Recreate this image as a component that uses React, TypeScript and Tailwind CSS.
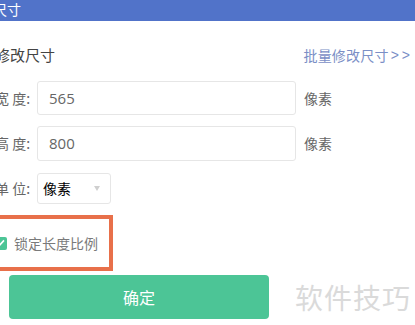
export default function App() {
  return (
    <div className="w-[415px] h-[325px] overflow-hidden bg-white font-['Noto_Sans_CJK_SC',sans-serif]">
      {/* header */}
      <div className="h-[21px] bg-[#5173c9] text-white text-[14px] leading-[18px] pl-0">
        <span className="-ml-[7px] inline-block">尺寸</span>
      </div>

      <div className="pt-[24px]">
        {/* title row */}
        <div className="flex items-center justify-between h-[20px] pr-[2px]">
          <span className="-ml-[5px] text-[15px] text-[#444]">修改尺寸</span>
          <span className="flex items-center text-[14px] text-[#7b8fc6]">
            <span className="tracking-[0.2px]">批量修改尺寸</span>
            <span className="ml-[2px] tracking-[3px] font-['Liberation_Sans',sans-serif]">&gt;&gt;</span>
          </span>
        </div>

        {/* width row */}
        <div className="flex items-center mt-[16px] h-[34px]">
          <span className="w-[37px] -ml-[5px] text-[14px] text-[#666] whitespace-nowrap">宽 度:</span>
          <div className="ml-[5px] w-[259px] h-[34px] border border-[#e6e6e6] rounded-[3px] flex items-center pl-[11px] text-[15px] text-[#666] font-['Open_Sans',sans-serif]">
            565
          </div>
          <span className="ml-[8px] text-[14px] text-[#666]">像素</span>
        </div>

        {/* height row */}
        <div className="flex items-center mt-[11px] h-[35px]">
          <span className="w-[37px] -ml-[5px] text-[14px] text-[#666] whitespace-nowrap">高 度:</span>
          <div className="ml-[5px] w-[259px] h-[35px] border border-[#e6e6e6] rounded-[3px] flex items-center pl-[11px] text-[15px] text-[#666] font-['Open_Sans',sans-serif]">
            800
          </div>
          <span className="ml-[8px] text-[14px] text-[#666]">像素</span>
        </div>

        {/* unit row */}
        <div className="flex items-center mt-[12px] h-[31px]">
          <span className="w-[37px] -ml-[5px] text-[14px] text-[#666] whitespace-nowrap">单 位:</span>
          <div className="ml-[5px] w-[74px] h-[31px] border border-[#e6e6e6] rounded-[3px] flex items-center justify-between pl-[5px] pr-[10px]">
            <span className="text-[14px] text-black">像素</span>
            <svg width="6" height="5" viewBox="0 0 6 5">
              <path d="M0 0 L6 0 L3 5 Z" fill="#cfcfcf" />
            </svg>
          </div>
        </div>

        {/* highlighted checkbox */}
        <div className="mt-[11px] -ml-[10px] w-[123px] h-[56px] border-4 border-[#e8704a] flex items-center">
          <div className="w-[13px] h-[13px] rounded-[2px] bg-[#4cc596] flex items-center justify-center">
            <svg width="9" height="8" viewBox="0 0 9 8">
              <path d="M1 4.2 L3.4 6.4 L8 1.4" stroke="white" strokeWidth="1.6" fill="none" />
            </svg>
          </div>
          <span className="ml-[7px] text-[14px] text-[#7a7a7a]">锁定长度比例</span>
        </div>

        {/* confirm row */}
        <div className="flex items-center mt-[4px]">
          <button className="ml-[9px] w-[260px] h-[44px] rounded-[4px] bg-[#4cc596] text-white text-[16px]">确定</button>
          <span className="ml-[26px] text-[28px] text-[#dadada] tracking-[1px]">软件技巧</span>
        </div>
      </div>
    </div>
  )
}
